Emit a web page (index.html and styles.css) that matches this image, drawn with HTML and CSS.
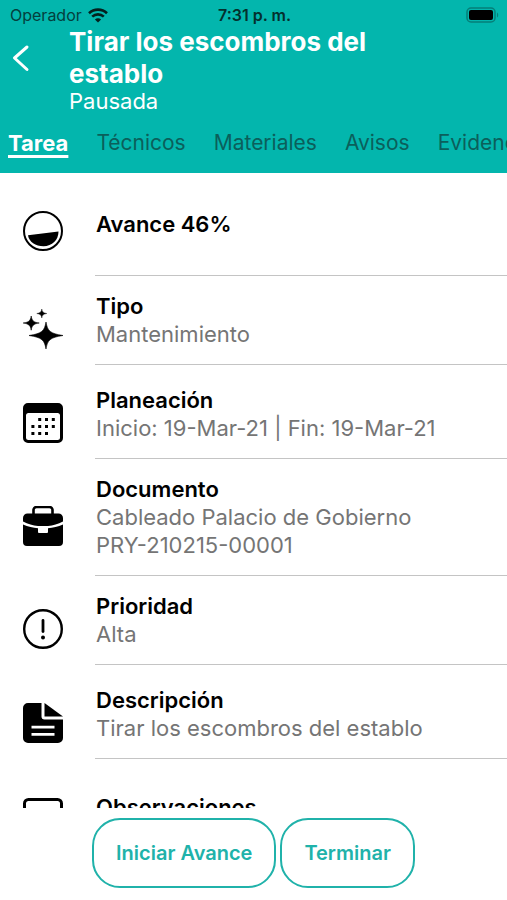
FILE: index.html
```html
<!DOCTYPE html>
<html lang="es">
<head>
    <meta charset="UTF-8">
    <meta name="viewport" content="width=device-width, initial-scale=1.0">
    <title>Tarea</title>
    <link rel="stylesheet" href="styles.css">
</head>
<body>
  <header class="header">
    <div class="status">
      <div class="carrier">
        <span>Operador</span>
        <svg width="20" height="15" viewBox="0 0 20 15" fill="none" stroke="#04201e" stroke-width="2.6">
          <path d="M1 5.2C6 .4 14 .4 19 5.2" />
          <path d="M4.2 8.6c3.3-3 8.300-3 11.600 0" />
          <path d="M10 14.600 6.900 11.500c1.700-1.600 4.500-1.600 6.200 0z" fill="#04201e" stroke="none" />
        </svg>
      </div>
      <span class="time">7:31 p. m.</span>
      <div class="battery">
        <svg width="33" height="16" viewBox="0 0 33 16">
          <rect x="1" y="1" width="28" height="14" rx="4" fill="none" stroke="#067f78" stroke-width="1.500" />
          <rect x="3" y="3" width="24" height="10" rx="2" fill="#000" />
          <path d="M31 5.500c1.600.8 1.600 4.200 0 5z" fill="#067f78" />
        </svg>
      </div>
    </div>
    <div class="titlebar">
      <a class="back" href="#" aria-label="Regresar">
        <svg width="18" height="28" viewBox="0 0 18 28" fill="none" stroke="#fff" stroke-width="3" stroke-linecap="round" stroke-linejoin="round">
          <path d="M15 3 2.500 14 15 25.500" />
        </svg>
      </a>
      <div class="heading">
        <h1>Tirar los escombros del establo</h1>
        <p>Pausada</p>
      </div>
    </div>
    <nav class="tabs">
      <a class="active" href="#tarea">Tarea</a>
      <a href="#tecnicos">Técnicos</a>
      <a href="#materiales">Materiales</a>
      <a href="#avisos">Avisos</a>
      <a href="#evidencias">Evidencias</a>
    </nav>
  </header>

  <main class="list" id="tarea">
    <section class="row first">
      <svg class="icon" viewBox="0 0 40 40">
        <circle cx="20" cy="20" r="19" fill="none" stroke="#000" stroke-width="2" />
        <path d="M5 24.300 35.500 20.500C35.500 29 29 35.200 20.500 35.200 12.500 35.200 6 31 5 24.300z" />
      </svg>
      <div class="text"><h2>Avance 46%</h2></div>
    </section>
    <section class="row">
      <svg class="icon" viewBox="0 0 40 40">
        <path d="M23 13c1.600 9 4 11.500 17 13.500-13 2-15.400 4.500-17 13.500-1.600-9-4-11.500-17-13.500 13-2 15.400-4.500 17-13.500z" stroke="#000" stroke-width=".6" />
        <path d="M8.200 7c.8 4.800 2.200 6.200 8 7-5.800.9-7.200 2.400-8 7.200-.8-4.800-2.200-6.300-8-7.200 5.800-.8 7.200-2.200 8-7z" stroke="#000" stroke-width=".6" />
        <path d="M18.800 0c.5 3 1.400 3.900 5 4.500-3.600.6-4.500 1.500-5 4.500-.5-3-1.400-3.900-5-4.500 3.600-.6 4.500-1.500 5-4.500z" stroke="#000" stroke-width=".4" />
      </svg>
      <div class="text">
        <h2>Tipo</h2>
        <p>Mantenimiento</p>
      </div>
    </section>
    <section class="row tall">
      <svg class="icon" viewBox="0 0 40 40">
        <path fill-rule="evenodd" d="M5 0h30a5 5 0 0 1 5 5v30a5 5 0 0 1-5 5H5a5 5 0 0 1-5-5V5a5 5 0 0 1 5-5zM5.500 10A2.500 2.500 0 0 0 3 12.500v22A2.500 2.500 0 0 0 5.500 37h29a2.500 2.500 0 0 0 2.500-2.500v-22a2.500 2.500 0 0 0-2.500-2.500z" />
        <g stroke="#000" stroke-width="3" stroke-dasharray="3 3.800">
          <path d="M15.200 16.500h17" />
          <path d="M8.400 23.500h24" />
          <path d="M8.400 30.500h17" />
        </g>
      </svg>
      <div class="text">
        <h2>Planeación</h2>
        <p>Inicio: 19-Mar-21 | Fin: 19-Mar-21</p>
      </div>
    </section>
    <section class="row">
      <svg class="icon" viewBox="0 0 40 40">
        <path d="M10.500 10V4a3 3 0 0 1 3-3h13a3 3 0 0 1 3 3v6" fill="none" stroke="#000" stroke-width="2.600" />
        <path d="M4.500 7.500h31A4.500 4.500 0 0 1 40 12v3.500c-5 2.600-10 4-15 4.500H15c-5-.5-10-1.900-15-4.500V12a4.500 4.500 0 0 1 4.500-4.500z" />
        <path d="M0 18.500c5 2.300 10 3.300 15 3.700V26a1 1 0 0 0 1 1h8a1 1 0 0 0 1-1v-3.800c5-.4 10-1.400 15-3.700V36a4 4 0 0 1-4 4H4a4 4 0 0 1-4-4z" />
      </svg>
      <div class="text">
        <h2>Documento</h2>
        <p>Cableado Palacio de Gobierno</p>
        <p>PRY-210215-00001</p>
      </div>
    </section>
    <section class="row">
      <svg class="icon" viewBox="0 0 40 40">
        <circle cx="20" cy="20" r="18.800" fill="none" stroke="#000" stroke-width="2.400" />
        <path d="M20 11.500v11" stroke="#000" stroke-width="2.800" stroke-linecap="round" />
        <circle cx="20" cy="28.500" r="2" />
      </svg>
      <div class="text">
        <h2>Prioridad</h2>
        <p>Alta</p>
      </div>
    </section>
    <section class="row tall">
      <svg class="icon" viewBox="0 0 40 40">
        <path fill-rule="evenodd" d="M5 0h13.500v13.500a3 3 0 0 0 3 3H40V35a5 5 0 0 1-5 5H5a5 5 0 0 1-5-5V5a5 5 0 0 1 5-5zM8.500 22.800v2.700h23v-2.700zM8.500 30v2.700h23V30z" />
        <path d="M21.500 0 40 13.500H21.500z" />
      </svg>
      <div class="text">
        <h2>Descripción</h2>
        <p>Tirar los escombros del establo</p>
      </div>
    </section>
    <section class="row last">
      <svg class="icon" viewBox="0 0 40 40">
        <rect x="1.500" y="1.500" width="37" height="37" rx="4" fill="none" stroke="#000" stroke-width="3" />
      </svg>
      <div class="text"><h2>Observaciones</h2></div>
    </section>
  </main>

  <footer class="actions">
    <button type="button">Iniciar Avance</button>
    <button type="button">Terminar</button>
  </footer>
</body>
</html>
```
FILE: styles.css
```css
* {
  box-sizing: border-box;
}
body {
  margin: 0;
  height: 100vh;
  display: flex;
  flex-direction: column;
  background: #fff;
  color: #000;
  font-family: Inter, "Liberation Sans", sans-serif;
  font-size: 22px;
  line-height: 28px;
}
h1, h2, p {
  margin: 0;
}
a {
  color: inherit;
  text-decoration: none;
}
.header {
  flex: none;
  background: #03b6ad;
  overflow: hidden;
}
.status {
  display: grid;
  grid-template-columns: 1fr auto 1fr;
  align-items: center;
  height: 26px;
  padding: 4px 8px 0 10px;
  font-size: 16px;
  line-height: 22px;
  color: #04403d;
}
.carrier {
  display: flex;
  align-items: center;
  gap: 6px;
}
.time {
  font-weight: 600;
  color: #04302e;
}
.battery {
  display: flex;
  justify-content: flex-end;
}
.titlebar {
  display: flex;
  padding: 0 64px 0 12px;
  color: #fff;
}
.back {
  flex: none;
  width: 57px;
  padding-top: 18px;
}
.heading h1 {
  font-size: 26px;
  line-height: 32px;
  font-weight: 700;
}
.heading p {
  line-height: 22px;
}
.tabs {
  display: flex;
  gap: 28px;
  padding: 17px 8px 16px;
  color: #0b5f5b;
  font-size: 21px;
  white-space: nowrap;
}
.tabs .active {
  color: #fff;
  font-size: 22px;
  font-weight: 700;
  text-decoration: underline;
  text-decoration-thickness: 3px;
  text-underline-offset: 4px;
}
.list {
  flex: 1;
  min-height: 0;
  overflow-y: auto;
  scrollbar-width: none;
}
.row {
  display: flex;
  align-items: center;
  padding-left: 23px;
}
/* the icon hangs a little below the middle of its text */
.icon {
  flex: none;
  width: 40px;
  height: 40px;
  margin-right: 32px;
}
.text {
  flex: 1;
  padding: 16px 0 16px 1px;
  border-bottom: 1px solid #c4c4c4;
}
.row .icon {
  margin-top: 16px;
}
.tall .text {
  padding-top: 21px;
}
.tall .icon {
  margin-top: 21px;
}
.first .text {
  padding-top: 37px;
  padding-bottom: 37px;
}
.first .icon {
  margin-top: 12px;
}
.last .text {
  padding-top: 34px;
  padding-bottom: 34px;
}
.last .icon {
  margin-top: 20px;
}
.text h2 {
  font-size: 22px;
  line-height: 28px;
  font-weight: 600;
}
.text p {
  color: #757575;
}
.actions {
  flex: none;
  display: flex;
  justify-content: center;
  gap: 4px;
  padding: 10px 0 12px;
}
.actions button {
  height: 70px;
  padding: 0 22px;
  border: 2px solid #20b2aa;
  border-radius: 28px;
  background: #fff;
  color: #20b2aa;
  font-family: inherit;
  font-size: 20px;
  font-weight: 600;
}
```
